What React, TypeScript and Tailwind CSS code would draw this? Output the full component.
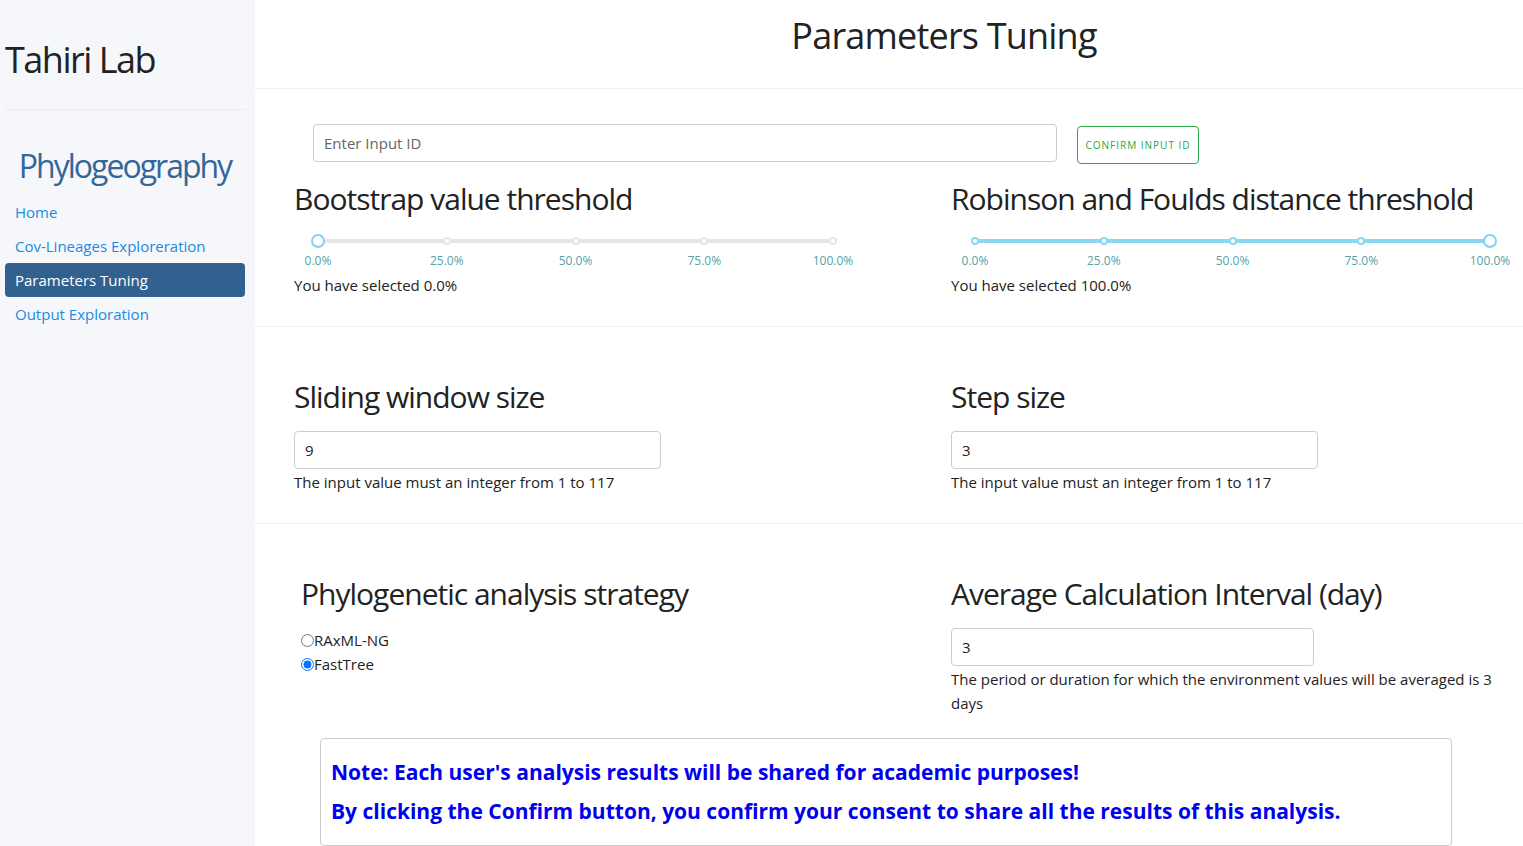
import React from 'react';

const TICKS = ['0.0%', '25.0%', '50.0%', '75.0%', '100.0%'];

const NAV = [
  { label: 'Home', active: false },
  { label: 'Cov-Lineages Exploreration', active: false },
  { label: 'Parameters Tuning', active: true },
  { label: 'Output Exploration', active: false },
];

function Slider({ value }: { value: number }) {
  const full = value === 100;
  return (
    <div className="ml-[18px] w-[527px]">
      <div className="relative mx-[6px] h-[12px]">
        <div
          className={`absolute left-0 right-0 top-[4px] h-[4px] rounded ${full ? 'bg-[#8ad7f4]' : 'bg-[#e6e6e6]'}`}
        />
        {TICKS.map((t, i) => (
          <div
            key={t}
            className={`absolute top-[2px] h-[8px] w-[8px] -translate-x-1/2 rounded-full border-2 bg-white ${full ? 'border-[#8ad7f4]' : 'border-[#e6e6e6]'}`}
            style={{ left: `${i * 25}%` }}
          />
        ))}
        <div
          className="absolute top-[-1px] h-[14px] w-[14px] -translate-x-1/2 rounded-full border-2 border-[#7fd2f3] bg-white"
          style={{ left: `${value}%` }}
        />
      </div>
      <div className="relative mx-[6px] mt-[7px] h-[14px]">
        {TICKS.map((t, i) => (
          <span
            key={t}
            className="absolute -translate-x-1/2 text-[12px] leading-[14px] text-[#55a3a6]"
            style={{ left: `${i * 25}%` }}
          >
            {t}
          </span>
        ))}
      </div>
    </div>
  );
}

function Heading({ children }: { children: React.ReactNode }) {
  return <h2 className="text-[30px] leading-[36px] tracking-[-1px] text-[#222]">{children}</h2>;
}

export default function App() {
  return (
    <div
      className="flex h-[846px] w-full overflow-hidden bg-white text-[#222]"
      style={{ fontFamily: '"Open Sans", "Noto Sans", sans-serif' }}
    >
      <aside className="w-[255px] shrink-0 bg-[#f5f7fa] pl-[5px] pr-[10px]">
        <div className="pt-[38px] text-[36px] leading-[44px] tracking-[-1.5px] text-[#222]">Tahiri Lab</div>
        <div className="mt-[27px] h-px bg-[#e8eaed]" />
        <div className="mt-[36px] text-center text-[32px] leading-[40px] tracking-[-2px] text-[#336699]">
          Phylogeography
        </div>
        <nav className="mt-[9px] flex flex-col">
          {NAV.map((n) => (
            <div
              key={n.label}
              className={`h-[34px] rounded px-[10px] text-[15px] leading-[34px] ${n.active ? 'bg-[#33618f] text-white' : 'text-[#1a8be3]'}`}
            >
              {n.label}
            </div>
          ))}
        </nav>
      </aside>

      <main className="flex-1">
        <header className="flex h-[89px] items-center justify-center border-b border-[#f0f1f3] pl-[110px]">
          <h1 className="mb-[16px] text-[36px] leading-[44px] tracking-[-0.8px] text-[#222]">Parameters Tuning</h1>
        </header>

        <section className="h-[238px] border-b border-[#f0f1f3] pl-[39px] pr-[13px]">
          <div className="flex items-center pt-[33px] pl-[19px]">
            <input
              className="h-[38px] w-[744px] rounded border border-[#ccc] px-[10px] text-[15px] text-[#555] placeholder:text-[#666] outline-none"
              placeholder="Enter Input ID"
            />
            <button className="ml-[20px] mt-[4px] h-[38px] w-[122px] rounded border border-[#28a745] text-[10px] tracking-[1px] text-[#28a745]">
              CONFIRM INPUT ID
            </button>
          </div>
          <div className="grid grid-cols-[657px_1fr] pt-[17px]">
            <div>
              <Heading>Bootstrap value threshold</Heading>
              <div className="mt-[18px]">
                <Slider value={0} />
              </div>
              <p className="mt-[6px] text-[15px] leading-[22px]">You have selected 0.0%</p>
            </div>
            <div>
              <Heading>Robinson and Foulds distance threshold</Heading>
              <div className="mt-[18px]">
                <Slider value={100} />
              </div>
              <p className="mt-[6px] text-[15px] leading-[22px]">You have selected 100.0%</p>
            </div>
          </div>
        </section>

        <section className="h-[197px] border-b border-[#f0f1f3] pl-[39px] pr-[13px] pt-[52px]">
          <div className="grid grid-cols-[657px_1fr]">
            <div>
              <Heading>Sliding window size</Heading>
              <input
                className="mt-[16px] block h-[38px] w-[367px] rounded border border-[#ccc] px-[10px] text-[15px] text-[#222] outline-none"
                defaultValue="9"
              />
              <p className="mt-[2px] text-[15px] leading-[22px]">The input value must an integer from 1 to 117</p>
            </div>
            <div>
              <Heading>Step size</Heading>
              <input
                className="mt-[16px] block h-[38px] w-[367px] rounded border border-[#ccc] px-[10px] text-[15px] text-[#222] outline-none"
                defaultValue="3"
              />
              <p className="mt-[2px] text-[15px] leading-[22px]">The input value must an integer from 1 to 117</p>
            </div>
          </div>
        </section>

        <section className="pl-[39px] pr-[13px] pt-[52px]">
          <div className="grid grid-cols-[657px_1fr]">
            <div className="pl-[7px]">
              <Heading>Phylogenetic analysis strategy</Heading>
              <div className="mt-[16px] flex flex-col text-[15px] leading-[24px]">
                <label className="flex items-center">
                  <input type="radio" name="strategy" className="m-0 h-[13px] w-[13px]" />
                  RAxML-NG
                </label>
                <label className="flex items-center">
                  <input type="radio" name="strategy" defaultChecked className="m-0 h-[13px] w-[13px]" />
                  FastTree
                </label>
              </div>
            </div>
            <div>
              <Heading>Average Calculation Interval (day)</Heading>
              <input
                className="mt-[16px] block h-[38px] w-[363px] rounded border border-[#ccc] px-[10px] text-[15px] text-[#222] outline-none"
                defaultValue="3"
              />
              <p className="mt-[1px] text-[15px] leading-[24px]">
                The period or duration for which the environment values will be averaged is 3 days
              </p>
            </div>
          </div>
          <div className="ml-[26px] mt-[23px] w-[1132px] rounded border border-[#ccc] px-[10px] pb-[14px] pt-[14px] text-[21px] font-bold leading-[39px] text-[#0000ee]">
            <p>Note: Each user's analysis results will be shared for academic purposes!</p>
            <p>By clicking the Confirm button, you confirm your consent to share all the results of this analysis.</p>
          </div>
        </section>
      </main>
    </div>
  );
}
